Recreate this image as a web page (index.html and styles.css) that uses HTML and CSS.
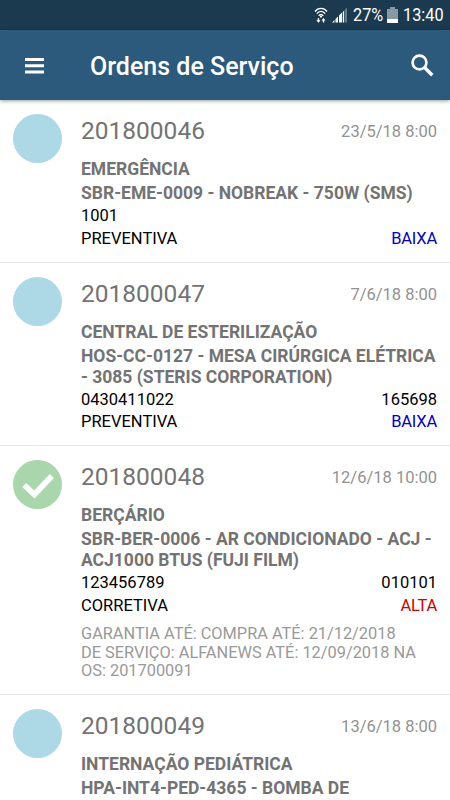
FILE: index.html
```html
<!DOCTYPE html>
<html lang="pt-BR">
  <head>
    <meta charset="utf-8">
    <title>Ordens de Serviço</title>
    <link rel="stylesheet" href="styles.css">
  </head>
  <body>
    <div class="statusbar">
      <svg class="wifi" width="14" height="17" viewBox="0 0 14 17">
        <g fill="none" stroke="#fff" stroke-width="1.3">
          <path d="M1 4.500C4 .3 10 .3 13 4.500"/>
          <path d="M2.800 6.700c2.300-3 6.100-3 8.400 0"/>
          <path d="M4.700 8.700c1.300-1.500 3.300-1.500 4.600 0"/>
        </g>
        <circle cx="7" cy="9.600" r="1.100" fill="#fff"/>
        <path d="M2.400 13.200h1.300v-2h1.500v2h1.300l-2 2.500zM7.500 13.500l2-2.500 2 2.500h-1.300v2H8.800v-2z" fill="#fff"/>
      </svg>
      <svg class="signal" width="16" height="16" viewBox="0 0 16 16">
        <path d="M0 15.500L2.500 13v2.500zM3.500 12L6 9.500v6H3.500zM7 8.500L10 5.500v10H7z" fill="#fff"/>
        <path d="M10.800 5L12 3.800v11.700h-1.200z" fill="#fff"/>
        <path d="M12.500 3L15 .5v15h-2.500z" fill="#617b8b"/>
      </svg>
      <span class="percent">27%</span>
      <svg class="battery" width="11" height="16" viewBox="0 0 11 16">
        <path d="M3 0h5v2h3v14H0V2h3z" fill="#8799a4"/>
        <path d="M0 12h11v4H0z" fill="#fff"/>
      </svg>
      <span class="clock">13:40</span>
    </div>
    <div class="toolbar">
      <svg class="menu" width="19" height="16" viewBox="0 0 19 16">
        <path d="M0 0h19v3H0zM0 6.200h19v3H0zM0 12.400h19v3H0z" fill="#fff"/>
      </svg>
      <h1>Ordens de Serviço</h1>
      <svg class="search" width="23" height="23" viewBox="0 0 23 23" fill="none" stroke="#fff">
        <circle cx="8.500" cy="8.500" r="6.900" stroke-width="2.700"/>
        <path d="M13.300 13.300l8 8" stroke-width="3.400"/>
      </svg>
    </div>

    <div class="orders">
      <div class="order">
        <div class="status"></div>
        <div class="info">
          <div class="row head"><span class="number">201800046</span><span class="date">23/5/18 8:00</span></div>
          <div class="sector">EMERGÊNCIA</div>
          <div class="equipment">SBR-EME-0009 - NOBREAK - 750W (SMS)</div>
          <div class="row"><span>1001</span></div>
          <div class="row"><span>PREVENTIVA</span><span class="low">BAIXA</span></div>
        </div>
      </div>
      <div class="order">
        <div class="status"></div>
        <div class="info">
          <div class="row head"><span class="number">201800047</span><span class="date">7/6/18 8:00</span></div>
          <div class="sector">CENTRAL DE ESTERILIZAÇÃO</div>
          <div class="equipment">HOS-CC-0127 - MESA CIRÚRGICA ELÉTRICA<br>- 3085 (STERIS CORPORATION)</div>
          <div class="row"><span>0430411022</span><span>165698</span></div>
          <div class="row"><span>PREVENTIVA</span><span class="low">BAIXA</span></div>
        </div>
      </div>
      <div class="order">
        <div class="status done">
          <svg width="32" height="26" viewBox="0 0 32 26">
            <path d="M2.200 13l10.200 9.500L29.800 4" fill="none" stroke="#fff" stroke-width="5.800"/>
          </svg>
        </div>
        <div class="info">
          <div class="row head"><span class="number">201800048</span><span class="date">12/6/18 10:00</span></div>
          <div class="sector">BERÇÁRIO</div>
          <div class="equipment">SBR-BER-0006 - AR CONDICIONADO - ACJ -<br>ACJ1000 BTUS (FUJI FILM)</div>
          <div class="row"><span>123456789</span><span>010101</span></div>
          <div class="row"><span>CORRETIVA</span><span class="high">ALTA</span></div>
          <div class="warranty">GARANTIA ATÉ: COMPRA ATÉ: 21/12/2018<br>DE SERVIÇO: ALFANEWS ATÉ: 12/09/2018 NA<br>OS: 201700091</div>
        </div>
      </div>
      <div class="order">
        <div class="status"></div>
        <div class="info">
          <div class="row head"><span class="number">201800049</span><span class="date">13/6/18 8:00</span></div>
          <div class="sector">INTERNAÇÃO PEDIÁTRICA</div>
          <div class="equipment">HPA-INT4-PED-4365 - BOMBA DE</div>
        </div>
      </div>
    </div>
  </body>
</html>
```
FILE: styles.css
```css
body {
  margin: 0;
  height: 800px;
  overflow: hidden;
  display: flex;
  flex-direction: column;
  font-family: Roboto, sans-serif;
  background: #fff;
}
.statusbar {
  flex: none;
  height: 30px;
  box-sizing: border-box;
  padding-right: 6px;
  display: flex;
  align-items: center;
  justify-content: flex-end;
  background: #1c3a4f;
  color: #fff;
  font-size: 18.5px;
}
.wifi {
  margin-right: 4px;
}
.signal {
  margin-right: 5px;
}
.percent, .clock {
  white-space: nowrap;
  transform: scaleX(0.88);
  transform-origin: left;
}
.percent {
  width: 30px;
}
.battery {
  margin: 0 5px 0 4px;
}
.clock {
  width: 41px;
}
.toolbar {
  flex: none;
  height: 70px;
  box-sizing: border-box;
  padding: 2px 16px 0 25px;
  display: flex;
  align-items: center;
  background: #2c5a7c;
  box-shadow: 0 1px 4px rgba(0, 0, 0, 0.4);
  z-index: 1;
}
.toolbar h1 {
  flex: 1;
  margin: 0 0 0 46px;
  color: #fff;
  font-size: 25px;
  font-weight: 500;
}
.search {
  margin-bottom: 2px;
}
.orders {
  flex: 1;
  overflow: hidden;
}
.order {
  display: flex;
  padding: 14px 13px 11.5px;
  border-bottom: 1px solid #e8e8e8;
}
.status {
  flex: none;
  width: 49px;
  height: 49px;
  margin-right: 19px;
  border-radius: 50%;
  background: #add8e6;
  display: flex;
  align-items: center;
  justify-content: center;
}
.done {
  background: #a9d6ab;
}
.info {
  flex: 1;
  color: #000;
  font-size: 16.5px;
}
.row {
  display: flex;
  justify-content: space-between;
  line-height: 22.5px;
  white-space: nowrap;
}
.head {
  margin: 2px 0 12px;
  line-height: 30px;
}
.number {
  color: #737373;
  font-size: 24.5px;
}
.date {
  color: #929292;
  padding-top: 1px;
}
.sector, .equipment {
  color: #737373;
  font-size: 17.5px;
  font-weight: bold;
  line-height: 21px;
  white-space: nowrap;
}
.sector {
  margin-bottom: 3px;
}
.equipment {
  margin-bottom: 1px;
}
.warranty {
  margin: 8px 0 1.2px;
  color: #999;
  font-size: 16.35px;
  line-height: 18.7px;
  white-space: nowrap;
}
.low, .high {
  letter-spacing: -0.2px;
}
.low {
  color: #0000cc;
}
.high {
  color: #d00000;
}
```
